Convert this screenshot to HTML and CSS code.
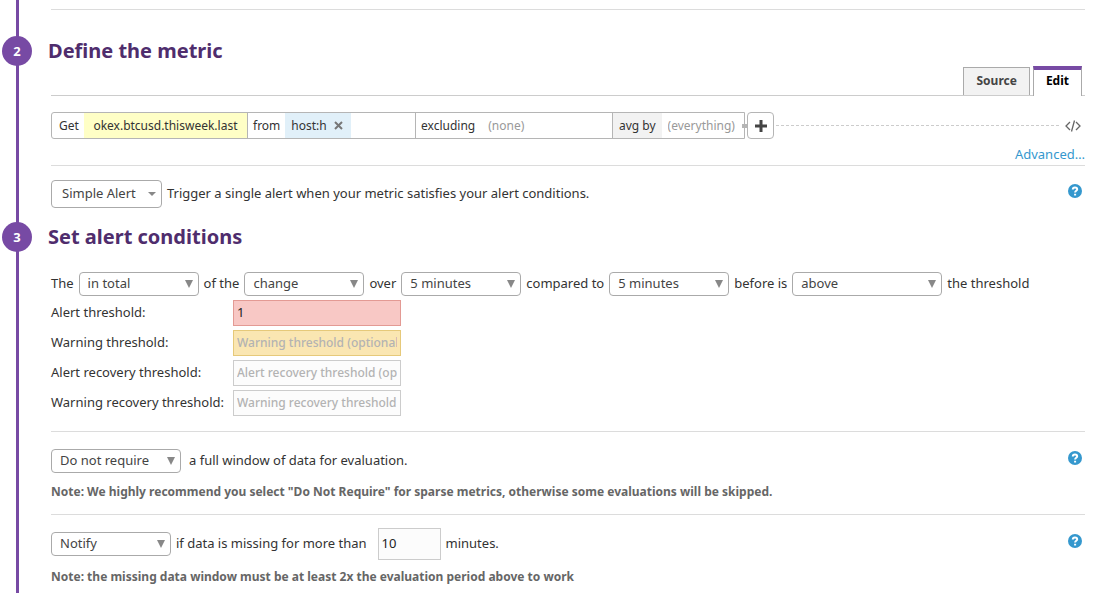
FILE: index.html
```html
<!DOCTYPE html>
<html lang="en">
<head>
<meta charset="utf-8">
<meta name="viewport" content="width=device-width, initial-scale=1">
<title>New Monitor</title>
<link rel="stylesheet" href="styles.css">
</head>
<body>
<main class="wizard">
  <section class="step">
    <header class="step-head">
      <span class="badge">2</span>
      <h2>Define the metric</h2>
    </header>
    <div class="content">
      <nav class="tabs">
        <button class="tab" type="button">Source</button>
        <button class="tab active" type="button">Edit</button>
      </nav>
      <div class="query">
        <div class="query-box">
          <div class="field metric"><span class="label">Get</span><button class="token yellow" type="button">okex.btcusd.thisweek.last</button></div>
          <div class="field scope"><span class="label">from</span><span class="token blue">host:h <button class="remove" type="button" aria-label="Remove host:h"><svg width="9" height="9" viewBox="0 0 9 9"><path d="M1 1l7 7M8 1l-7 7"/></svg></button></span></div>
          <div class="field exclude"><label class="label" for="exclude">excluding</label><input id="exclude" placeholder="(none)"></div>
          <div class="field group"><button class="token gray" type="button">avg by</button><input aria-label="Group by" placeholder="(everything)"></div>
        </div>
        <span class="joint"></span>
        <button class="add" type="button" aria-label="Add function"><svg width="12" height="12" viewBox="0 0 12 12"><path d="M4.500 0h3v4.500h4.500v3h-4.500v4.500h-3v-4.500h-4.500v-3h4.500z"/></svg></button>
        <span class="dashes"></span>
        <button class="code" type="button" aria-label="Edit as text"><svg width="16" height="12" viewBox="0 0 16 12"><path d="M5 2L1 6l4 4M11 2l4 4-4 4M9.500 0.500l-3 11"/></svg></button>
      </div>
      <a class="advanced" href="#">Advanced…</a>
      <div class="row type-row">
        <select class="select type" id="type"><option>Simple Alert</option></select>
        <label for="type">Trigger a single alert when your metric satisfies your alert conditions.</label>
        <button class="help" type="button" aria-label="Help"><svg width="14" height="14" viewBox="0 0 14 14"><circle cx="7" cy="7" r="7"/><path d="M4.800 5.500C4.800 2.800 9.200 2.800 9.200 5.300C9.200 6.800 7.100 6.800 7.100 8.500M7.100 9.700v1.800"/></svg></button>
      </div>
    </div>
  </section>

  <section class="step">
    <header class="step-head">
      <span class="badge">3</span>
      <h2>Set alert conditions</h2>
    </header>
    <div class="content">
      <div class="row sentence">
        <label for="agg">The</label>
        <select class="select" id="agg"><option>in total</option></select>
        <label for="change">of the</label>
        <select class="select" id="change"><option>change</option></select>
        <label for="over">over</label>
        <select class="select" id="over"><option>5 minutes</option></select>
        <label for="before">compared to</label>
        <select class="select" id="before"><option>5 minutes</option></select>
        <label for="compare">before is</label>
        <select class="select wide" id="compare"><option>above</option></select>
        <span>the threshold</span>
      </div>
      <div class="thresholds">
        <label for="alert">Alert threshold:</label>
        <input class="box alert" id="alert" value="1">
        <label for="warn">Warning threshold:</label>
        <input class="box warn" id="warn" placeholder="Warning threshold (optional)">
        <label for="alert-rec">Alert recovery threshold:</label>
        <input class="box" id="alert-rec" placeholder="Alert recovery threshold (optional)">
        <label for="warn-rec">Warning recovery threshold:</label>
        <input class="box" id="warn-rec" placeholder="Warning recovery threshold (optional)">
      </div>
      <div class="panel">
        <div class="row">
          <select class="select medium" id="window"><option>Do not require</option></select>
          <label for="window">a full window of data for evaluation.</label>
          <button class="help" type="button" aria-label="Help"><svg width="14" height="14" viewBox="0 0 14 14"><circle cx="7" cy="7" r="7"/><path d="M4.800 5.500C4.800 2.800 9.200 2.800 9.200 5.300C9.200 6.800 7.100 6.800 7.100 8.500M7.100 9.700v1.800"/></svg></button>
        </div>
        <p class="note">Note: We highly recommend you select "Do Not Require" for sparse metrics, otherwise some evaluations will be skipped.</p>
      </div>
      <div class="panel">
        <div class="row">
          <select class="select" id="notify" aria-label="Notification"><option>Notify</option></select>
          <label for="missing">if data is missing for more than</label>
          <input class="box minutes" id="missing" value="10">
          <span>minutes.</span>
          <button class="help" type="button" aria-label="Help"><svg width="14" height="14" viewBox="0 0 14 14"><circle cx="7" cy="7" r="7"/><path d="M4.800 5.500C4.800 2.800 9.200 2.800 9.200 5.300C9.200 6.800 7.100 6.800 7.100 8.500M7.100 9.700v1.800"/></svg></button>
        </div>
        <p class="note">Note: the missing data window must be at least 2x the evaluation period above to work</p>
      </div>
    </div>
  </section>
</main>
</body>
</html>
```
FILE: styles.css
```css
* { box-sizing: border-box; }
body {
  margin: 0;
  background: #fff;
  color: #333;
  font: 13px/20px "Noto Sans", "Open Sans", sans-serif;
}
button, input, select { font: inherit; color: inherit; margin: 0; }
button { border: 0; padding: 0; background: none; cursor: pointer; }
svg { display: block; }

.wizard {
  margin-left: 16px;
  padding: 9px 30px 0 29px;
  border-left: 3px solid #774aa4;
  min-height: 100vh;
}
.content { margin-left: 3px; }
.step:first-child::before {
  content: "";
  display: block;
  margin: 0 0 26px 3px;
  border-top: 1px solid #dcdcdc;
}
.step-head { position: relative; }
.step-head h2 {
  margin: 0;
  color: #4f2d6d;
  font-size: 20px;
  line-height: 30px;
  font-weight: 700;
}
.badge {
  position: absolute;
  left: -46px;
  top: 0;
  width: 30px;
  height: 30px;
  border-radius: 50%;
  background: #774aa4;
  color: #fff;
  font-size: 13px;
  font-weight: 700;
  line-height: 30px;
  text-align: center;
}

.tabs {
  display: flex;
  justify-content: flex-end;
  align-items: flex-end;
  gap: 3px;
  height: 30px;
  padding-right: 3px;
  border-bottom: 1px solid #ccc;
}
.tab {
  height: 28px;
  padding: 0 12px 2px;
  border: 1px solid #aaa;
  border-bottom: 0;
  background: #f2f2f2;
  color: #444;
  font-size: 12px;
  font-weight: 700;
}
.tab.active {
  height: 30px;
  margin-bottom: -1px;
  padding-bottom: 4px;
  border-top: 4px solid #774aa4;
  background: #fff;
  color: #000;
}

.query { display: flex; align-items: center; margin-top: 16px; font-size: 12px; }
.query-box {
  display: flex;
  height: 27px;
  border: 1px solid #b5b5b5;
  border-radius: 3px 0 0 3px;
}
.field { display: flex; align-items: stretch; line-height: 25px; }
.field + .field { border-left: 1px solid #b5b5b5; }
.label { padding: 0 5px; }
.field input {
  flex: 1;
  min-width: 0;
  padding: 0 6px;
  border: 0;
  background: none;
}
.metric { width: 195px; }
.metric .label { padding-left: 7px; }
.metric .token { flex: 1; }
.scope { width: 168px; }
.exclude { width: 197px; }
.exclude input { padding-left: 8px; }
.group { width: 132px; }
.token { padding: 0 6px; white-space: nowrap; }
.yellow { background: #ffffc6; }
.blue { display: flex; align-items: center; gap: 7px; padding-right: 8px; background: #e1f0f9; }
.gray { background: #f2f2f2; }
.remove path { fill: none; stroke: #777; stroke-width: 2; }
.field input::placeholder { color: #999; opacity: 1; }
.joint { width: 5px; height: 4px; margin-left: -3px; background: #b5b5b5; }
.add {
  display: grid;
  place-items: center;
  width: 27px;
  height: 27px;
  border: 1px solid #b5b5b5;
  border-radius: 4px;
}
.add path { fill: #444; }
.dashes { flex: 1; margin: 0 6px 0 2px; border-top: 1px dashed #ccc; }
.code { margin-right: 4px; }
.code path { fill: none; stroke: #666; stroke-width: 1.3; }
.advanced {
  display: block;
  margin-top: 5px;
  padding-bottom: 1px;
  border-bottom: 1px solid #dcdcdc;
  color: #3598ce;
  text-align: right;
  text-decoration: none;
}

.row { display: flex; align-items: center; gap: 5px; white-space: nowrap; }
.row label, .row span, .thresholds label { padding-bottom: 2px; }
.type-row { margin: 14px 0; }
.select {
  appearance: none;
  width: 120px;
  height: 24px;
  padding: 0 20px 2px 8px;
  border: 1px solid #aaa;
  border-radius: 4px;
  color: #444;
  background: #fff url("data:image/svg+xml,%3Csvg xmlns='http://www.w3.org/2000/svg' width='8' height='8'%3E%3Cpath d='M0 0h8L4 8z' fill='%23888'/%3E%3C/svg%3E") no-repeat right 5px center;
}
.select.wide { width: 150px; }
.select.medium { width: 130px; margin-right: 3px; }
.select.type {
  width: 111px;
  height: 28px;
  padding-left: 10px;
  background-image: url("data:image/svg+xml,%3Csvg xmlns='http://www.w3.org/2000/svg' width='8' height='4'%3E%3Cpath d='M0 0h8L4 4z' fill='%23888'/%3E%3C/svg%3E");
}
.help { margin: 0 3px 6px auto; }
.help circle { fill: #3598ce; }
.help path { fill: none; stroke: #fff; stroke-width: 2; }
.sentence { margin-top: 20px; }
.sentence label { padding-bottom: 3px; }

.thresholds {
  display: grid;
  grid-template-columns: 178px 168px;
  column-gap: 4px;
  row-gap: 4px;
  align-items: center;
  margin: 4px 0 15px;
  white-space: nowrap;
}
.box {
  width: 100%;
  height: 26px;
  padding: 0 3px 2px;
  border: 1px solid #ccc;
  background: #fcfcfc;
  color: #222;
}
.box::placeholder { color: #b3b3b3; opacity: 1; font-size: 12px; font-weight: 500; }
.box.alert { border-color: #e39a94; background: #f8c8c5; }
.box.warn { border-color: #e6c97a; background: #fae6b2; }
.box.minutes { width: 63px; height: 32px; margin-left: 6px; }

.panel { padding: 17px 0 13px; border-top: 1px solid #dcdcdc; }
.note {
  margin: 10px 0 0;
  color: #666;
  font-size: 12px;
  line-height: 18px;
  font-weight: 700;
}
.panel:last-child { padding: 13px 0 0; }
.panel:last-child .note { margin-top: 8px; }
```
